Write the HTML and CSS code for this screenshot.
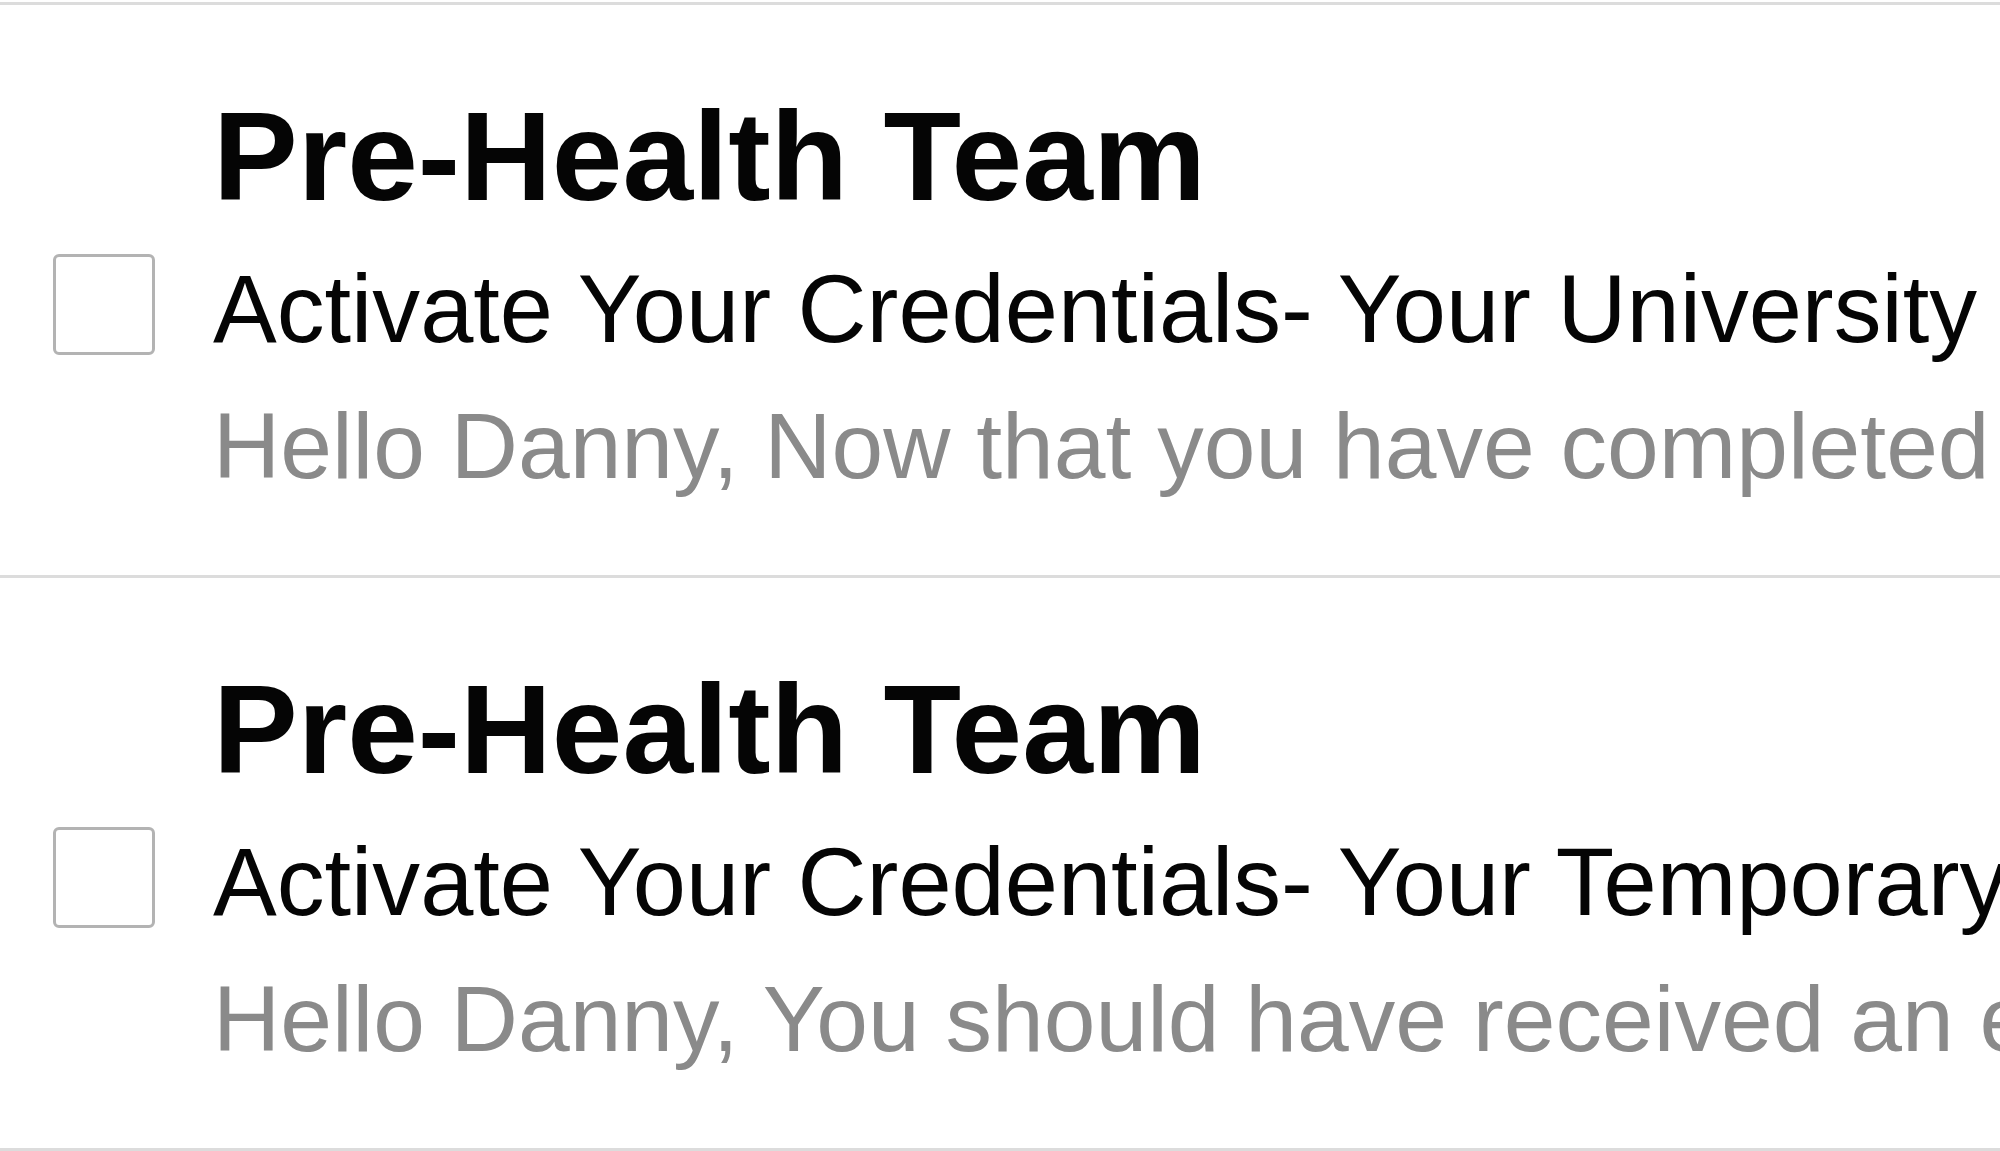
FILE: index.html
```html
<!DOCTYPE html>
<html lang="en">
<head>
<meta charset="utf-8">
<title>Inbox</title>
<link rel="stylesheet" href="styles.css">
</head>
<body>
<ul class="list">
  <li class="msg">
    <div class="sender">Pre-Health Team</div>
    <span class="check"></span>
    <div class="subject">Activate Your Credentials- Your University</div>
    <div class="preview">Hello Danny, Now that you have completed</div>
  </li>
  <li class="msg">
    <div class="sender">Pre-Health Team</div>
    <span class="check"></span>
    <div class="subject">Activate Your Credentials- Your Temporary</div>
    <div class="preview">Hello Danny, You should have received an email</div>
  </li>
</ul>
</body>
</html>
```
FILE: styles.css
```css
html, body {
  margin: 0;
  padding: 0;
  background: #ffffff;
  overflow: hidden;
}
body {
  font-family: "Liberation Sans", Arial, Helvetica, sans-serif;
  width: 2000px;
  height: 1151px;
}
.list {
  list-style: none;
  margin: 2px 0 0 0;
  padding: 0;
  border-top: 3px solid #dcdcdc;
}
.msg {
  display: grid;
  grid-template-columns: 213px 1fr;
  grid-template-rows: auto auto auto;
  align-content: start;
  box-sizing: border-box;
  height: 573px;
  padding-top: 81px;
  border-bottom: 3px solid #dcdcdc;
  overflow: hidden;
}
.sender {
  grid-column: 2;
  grid-row: 1;
  font-size: 127px;
  line-height: 140px;
  font-weight: bold;
  color: #050505;
  white-space: nowrap;
}
.check {
  grid-column: 1;
  grid-row: 2;
  align-self: start;
  margin: 28px 0 0 53px;
  width: 96px;
  height: 95px;
  border: 3px solid #b3b3b3;
  border-radius: 6px;
}
.subject {
  grid-column: 2;
  grid-row: 2;
  margin-top: 23px;
  font-size: 95.6px;
  line-height: 120px;
  color: #050505;
  white-space: nowrap;
  overflow: hidden;
}
.preview {
  grid-column: 2;
  grid-row: 3;
  margin-top: 17px;
  font-size: 93px;
  line-height: 120px;
  color: #8a8a8a;
  white-space: nowrap;
  overflow: hidden;
}
```
